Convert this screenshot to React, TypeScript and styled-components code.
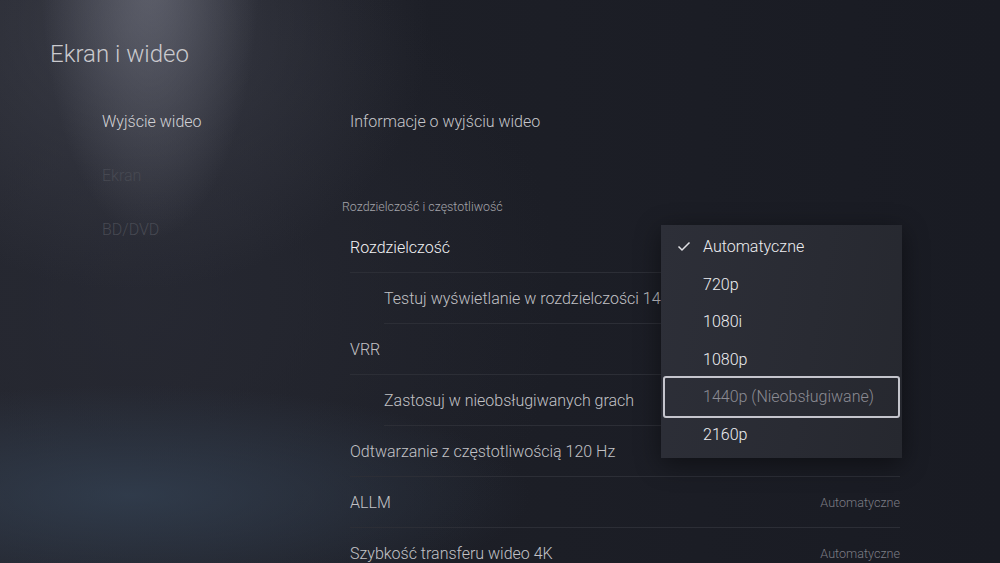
import React from 'react';
import styled, { createGlobalStyle } from 'styled-components';

const GlobalStyle = createGlobalStyle`
  html, body {
    margin: 0;
    padding: 0;
    background: #1b1d25;
  }
  * {
    box-sizing: border-box;
  }
`;

const NAV_ITEMS = [
  { label: 'Wyjście wideo', active: true },
  { label: 'Ekran', active: false },
  { label: 'BD/DVD', active: false },
];

const ROWS = [
  { label: 'Rozdzielczość', sub: false, focused: true, value: '' },
  { label: 'Testuj wyświetlanie w rozdzielczości 1440p', sub: true, focused: false, value: '' },
  { label: 'VRR', sub: false, focused: false, value: '' },
  { label: 'Zastosuj w nieobsługiwanych grach', sub: true, focused: false, value: '' },
  { label: 'Odtwarzanie z częstotliwością 120 Hz', sub: false, focused: false, value: '' },
  { label: 'ALLM', sub: false, focused: false, value: 'Automatyczne' },
  { label: 'Szybkość transferu wideo 4K', sub: false, focused: false, value: 'Automatyczne' },
];

const OPTIONS = [
  { label: 'Automatyczne', checked: true, disabled: false },
  { label: '720p', checked: false, disabled: false },
  { label: '1080i', checked: false, disabled: false },
  { label: '1080p', checked: false, disabled: false },
  { label: '1440p (Nieobsługiwane)', checked: false, disabled: true },
  { label: '2160p', checked: false, disabled: false },
];

const App = (): JSX.Element => {
  return (
    <Screen>
      <GlobalStyle />
      <Title>Ekran i wideo</Title>
      <Body>
        <Nav>
          {NAV_ITEMS.map(({ label, active }) => (
            <NavItem key={label} $active={active}>
              {label}
            </NavItem>
          ))}
        </Nav>
        <Content>
          <InfoLink>Informacje o wyjściu wideo</InfoLink>
          <SectionTitle>Rozdzielczość i częstotliwość</SectionTitle>
          <List>
            {ROWS.map(({ label, sub, focused, value }) => (
              <Row key={label} $sub={sub}>
                <RowLabel $focused={focused}>{label}</RowLabel>
                {value && <RowValue>{value}</RowValue>}
              </Row>
            ))}
          </List>
          <Dropdown>
            {OPTIONS.map(({ label, checked, disabled }) => (
              <Option key={label} $disabled={disabled}>
                <CheckSlot>
                  {checked && (
                    <svg width="14" height="11" viewBox="0 0 14 11">
                      <polyline
                        points="1.5,5.5 5,9 12.5,1.5"
                        fill="none"
                        stroke="#e2e2e6"
                        strokeWidth="1.5"
                      />
                    </svg>
                  )}
                </CheckSlot>
                {label}
              </Option>
            ))}
          </Dropdown>
        </Content>
      </Body>
    </Screen>
  );
};

export default App;

const Screen = styled.div`
  position: relative;
  width: 1000px;
  height: 563px;
  overflow: hidden;
  font-family: Roboto, 'Noto Sans', sans-serif;
  background:
    radial-gradient(ellipse 110px 280px at 150px -40px, rgba(130, 132, 145, 0.55), rgba(130, 132, 145, 0) 100%),
    radial-gradient(ellipse 300px 260px at 130px 30px, rgba(78, 80, 92, 0.5), rgba(78, 80, 92, 0) 100%),
    radial-gradient(ellipse 400px 110px at 130px 495px, rgba(52, 66, 84, 0.75), rgba(52, 66, 84, 0) 100%),
    radial-gradient(ellipse 420px 380px at 140px 300px, rgba(40, 42, 52, 0.8), rgba(40, 42, 52, 0) 100%),
    linear-gradient(90deg, #23252d 0%, #1d1f27 40%, #191b23 100%);
`;

const Title = styled.h1`
  margin: 0;
  height: 94px;
  padding: 40px 0 0 50px;
  font-size: 24px;
  line-height: 28px;
  font-weight: 300;
  color: #cacace;
`;

const Body = styled.div`
  display: grid;
  grid-template-columns: 350px 550px;
`;

const Nav = styled.nav`
  display: flex;
  flex-direction: column;
  padding-left: 102px;
`;

const NavItem = styled.div<{ $active: boolean }>`
  height: 54px;
  display: flex;
  align-items: center;
  font-size: 16px;
  font-weight: 300;
  color: ${({ $active }) => ($active ? '#d2d2d6' : '#474952')};
`;

const Content = styled.section`
  position: relative;
`;

const InfoLink = styled.div`
  height: 55px;
  display: flex;
  align-items: center;
  font-size: 16px;
  font-weight: 300;
  color: #c6c6ca;
`;

const SectionTitle = styled.div`
  height: 73px;
  display: flex;
  align-items: flex-end;
  padding: 0 0 7px 0;
  margin-left: -8px;
  font-size: 12.4px;
  line-height: 16px;
  font-weight: 300;
  color: #a4a4aa;
`;

const List = styled.div`
  display: flex;
  flex-direction: column;
`;

const Row = styled.div<{ $sub: boolean }>`
  height: 51px;
  margin-left: ${({ $sub }) => ($sub ? '34px' : '0')};
  display: flex;
  align-items: center;
  justify-content: space-between;
  border-bottom: 1px solid #2c2e36;
`;

const RowLabel = styled.span<{ $focused: boolean }>`
  font-size: 16px;
  font-weight: 300;
  white-space: nowrap;
  color: ${({ $focused }) => ($focused ? '#f2f2f4' : '#c2c2c6')};
`;

const RowValue = styled.span`
  font-size: 12.6px;
  font-weight: 300;
  color: #7c7c84;
`;

const Dropdown = styled.div`
  position: absolute;
  left: 311px;
  top: 131px;
  width: 241px;
  padding: 3px 0 5px;
  background: linear-gradient(100deg, #2d2f38 0%, #292b33 60%, #26282f 100%);
  box-shadow: 0 6px 24px rgba(0, 0, 0, 0.45);
  display: flex;
  flex-direction: column;
`;

const Option = styled.div<{ $disabled: boolean }>`
  position: relative;
  height: 37.5px;
  display: flex;
  align-items: center;
  padding-left: 16px;
  font-size: 16px;
  font-weight: 300;
  color: ${({ $disabled }) => ($disabled ? '#8c8c94' : '#eeeef1')};

  ${({ $disabled }) =>
    $disabled &&
    `
    &::after {
      content: '';
      position: absolute;
      top: -2px;
      bottom: -2px;
      left: 2px;
      right: 2px;
      border: 2px solid rgba(214, 214, 222, 0.9);
      border-radius: 3px;
    }
  `}
`;

const CheckSlot = styled.span`
  width: 26px;
  display: flex;
  align-items: center;
`;
